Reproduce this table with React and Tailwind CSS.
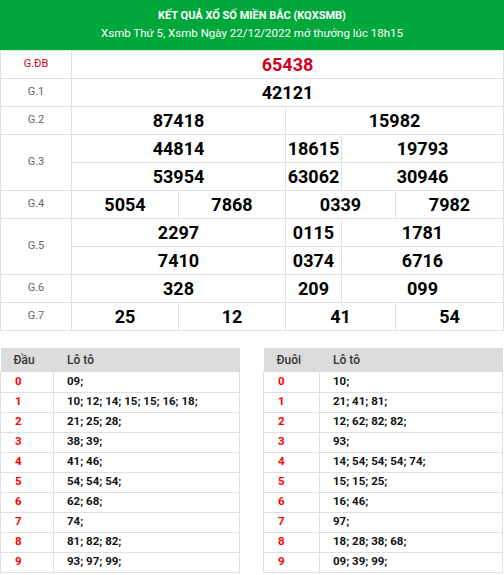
import React from "react";

const B = "border-[#e0e0e0]";

function Label({ children, red, span = 1 }) {
  return (
    <div
      className={`flex items-center justify-center border-l border-t ${B} text-[11px] ${red ? "text-[#d0021b]" : "text-[#666]"} ${span === 2 ? "row-span-2" : ""}`}
    >
      {children}
    </div>
  );
}

function Num({ children, cls = "", red }) {
  return (
    <div
      className={`flex h-[28px] items-center justify-center border-l border-t ${B} text-[18px] font-bold ${red ? "text-[#d0021b]" : "text-black"} ${cls}`}
    >
      {children}
    </div>
  );
}

function Lotto({ head, rows, first }) {
  return (
    <table className="w-[240px] border-collapse text-[11.5px]">
      <thead>
        <tr className="h-[24px] bg-[#dcdcdc] text-[#333] text-[12px]">
          <th className={`border-r ${B} text-left font-medium pl-[13px] ${first ? "w-[53px]" : "w-[56px]"}`}>{head}</th>
          <th className="text-left font-medium pl-[13px]">Lô tô</th>
        </tr>
      </thead>
      <tbody>
        {rows.map((r, i) => (
          <tr key={i} className={`h-[20px] border-b border-x ${B}`}>
            <td className={`border-r ${B} pl-[14px] font-bold text-[#ff0000]`}>{i}</td>
            <td className="pl-[13px] font-bold text-[#111]">{r}</td>
          </tr>
        ))}
      </tbody>
    </table>
  );
}

export default function App() {
  const dau = [
    "09;",
    "10; 12; 14; 15; 15; 16; 18;",
    "21; 25; 28;",
    "38; 39;",
    "41; 46;",
    "54; 54; 54;",
    "62; 68;",
    "74;",
    "81; 82; 82;",
    "93; 97; 99;",
  ];
  const duoi = [
    "10;",
    "21; 41; 81;",
    "12; 62; 82; 82;",
    "93;",
    "14; 54; 54; 54; 74;",
    "15; 15; 25;",
    "16; 46;",
    "97;",
    "18; 28; 38; 68;",
    "09; 39; 99;",
  ];
  return (
    <div className="w-[504px] bg-white" style={{ fontFamily: "Roboto, 'Liberation Sans', sans-serif" }}>
      <div className="flex h-[50px] flex-col items-center justify-center bg-[#00a83b] text-white">
        <div className="text-[11px] font-bold leading-[16px]">KẾT QUẢ XỔ SỐ MIỀN BẮC (KQXSMB)</div>
        <div className="text-[11.5px] leading-[18px]">Xsmb Thứ 5, Xsmb Ngày 22/12/2022 mở thưởng lúc 18h15</div>
      </div>
      <div className={`grid grid-cols-[71px_107px_107px_56px_54px_1fr] border-r border-b ${B}`}>
        <Label red>G.ĐB</Label>
        <Num cls="col-span-5" red>65438</Num>

        <Label>G.1</Label>
        <Num cls="col-span-5">42121</Num>

        <Label>G.2</Label>
        <Num cls="col-span-2">87418</Num>
        <Num cls="col-span-3">15982</Num>

        <Label span={2}>G.3</Label>
        <Num cls="col-span-2">44814</Num>
        <Num>18615</Num>
        <Num cls="col-span-2">19793</Num>
        <Num cls="col-span-2">53954</Num>
        <Num>63062</Num>
        <Num cls="col-span-2">30946</Num>

        <Label>G.4</Label>
        <Num>5054</Num>
        <Num>7868</Num>
        <Num cls="col-span-2">0339</Num>
        <Num>7982</Num>

        <Label span={2}>G.5</Label>
        <Num cls="col-span-2">2297</Num>
        <Num>0115</Num>
        <Num cls="col-span-2">1781</Num>
        <Num cls="col-span-2">7410</Num>
        <Num>0374</Num>
        <Num cls="col-span-2">6716</Num>

        <Label>G.6</Label>
        <Num cls="col-span-2">328</Num>
        <Num>209</Num>
        <Num cls="col-span-2">099</Num>

        <Label>G.7</Label>
        <Num>25</Num>
        <Num>12</Num>
        <Num cls="col-span-2">41</Num>
        <Num>54</Num>
      </div>
      <div className="mt-[17px] flex justify-between pr-[1px]">
        <Lotto head="Đầu" rows={dau} first />
        <Lotto head="Đuôi" rows={duoi} />
      </div>
    </div>
  );
}
